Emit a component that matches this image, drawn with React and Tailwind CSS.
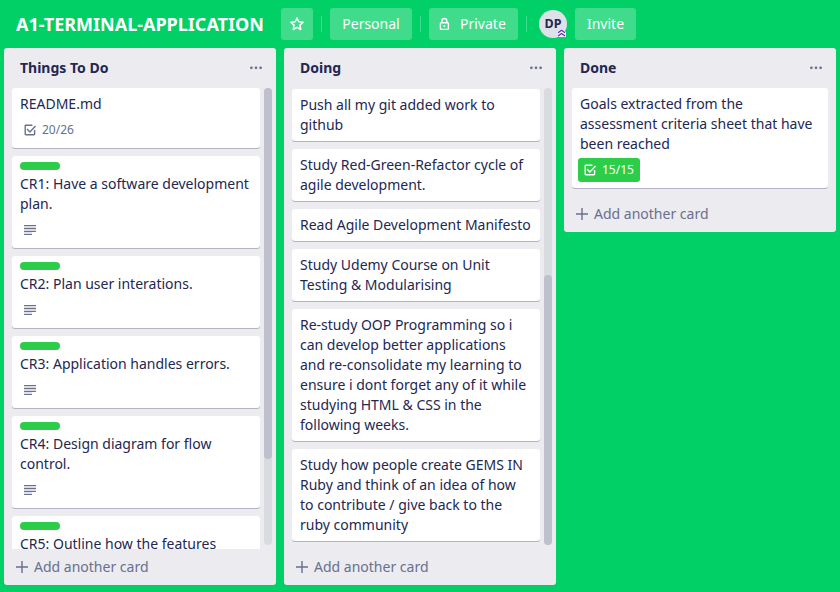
const todo = [
  { title: 'README.md', check: '20/26' },
  { title: 'CR1: Have a software development plan.', label: true, desc: true },
  { title: 'CR2: Plan user interations.', label: true, desc: true },
  { title: 'CR3: Application handles errors.', label: true, desc: true },
  { title: 'CR4: Design diagram for flow control.', label: true, desc: true },
  { title: 'CR5: Outline how the features', label: true, desc: true },
];

const doing = [
  { title: 'Push all my git added work to github' },
  { title: 'Study Red-Green-Refactor cycle of agile development.' },
  { title: 'Read Agile Development Manifesto' },
  { title: 'Study Udemy Course on Unit Testing & Modularising' },
  {
    title:
      'Re-study OOP Programming so i can develop better applications and re-consolidate my learning to ensure i dont forget any of it while studying HTML & CSS in the following weeks.',
  },
  {
    title:
      'Study how people create GEMS IN Ruby and think of an idea of how to contribute / give back to the ruby community',
  },
];

const done = [
  {
    title: 'Goals extracted from the assessment criteria sheet that have been reached',
    check: '15/15',
    complete: true,
  },
];

function CheckIcon() {
  return (
    <svg className="size-4 shrink-0" viewBox="0 0 16 16" fill="none" stroke="currentColor" strokeWidth="1.4">
      <path d="M10.4 3.3H3.8a.6.6 0 0 0-.6.6v8.2a.6.6 0 0 0 .6.6h8.2a.6.6 0 0 0 .6-.6V8" />
      <path d="M5 7l2.9 2.9 5.6-6" />
    </svg>
  );
}

function DescriptionIcon() {
  return (
    <svg className="size-4 shrink-0" viewBox="0 0 16 16" fill="currentColor">
      <rect x="2" y="3" width="12" height="7" opacity=".25" />
      <rect x="2" y="10" width="8" height="3" opacity=".2" />
      <rect x="2" y="3" width="12" height="1" rx=".3" />
      <rect x="2" y="6" width="12" height="1" rx=".3" />
      <rect x="2" y="9" width="12" height="1" rx=".3" />
      <rect x="2" y="12" width="8" height="1" rx=".3" />
    </svg>
  );
}

function Card({ card }) {
  return (
    <div className="shrink-0 rounded-[3px] bg-white px-2 pt-1.5 pb-0.5 shadow-[0_1px_0_#b3b3c4]">
      {card.label && <div className="mb-1 h-2 w-10 rounded-full bg-[#2bcd49]" />}
      <div className="mb-1">{card.title}</div>
      {(card.check || card.desc) && (
        <div className="-ml-0.5 flex pb-1">
          <div
            className={
              card.complete
                ? 'flex h-6 items-center gap-1 rounded-[3px] bg-[#2bcd49] pr-1.5 pl-1 text-xs text-white'
                : 'flex h-6 items-center gap-1 pr-1.5 pl-1 text-xs text-[#69708f]'
            }
          >
            {card.check ? <CheckIcon /> : <DescriptionIcon />}
            {card.check && <span>{card.check}</span>}
          </div>
        </div>
      )}
    </div>
  );
}

function List({ title, cards, thumb, className = '', cardsClass = '' }) {
  return (
    <section className={`flex w-[272px] flex-col rounded-[3px] bg-[#ebebf0] ${className}`}>
      <header className="flex h-10 shrink-0 items-center justify-between pr-3 pl-4">
        <h2 className="font-bold">{title}</h2>
        <svg className="size-4 text-[#69708f]" viewBox="0 0 16 16" fill="currentColor">
          <circle cx="3.4" cy="7.8" r="1.35" />
          <circle cx="8" cy="7.8" r="1.35" />
          <circle cx="12.6" cy="7.8" r="1.35" />
        </svg>
      </header>
      <div className="flex min-h-0 flex-1 gap-1 pr-1 pl-2">
        <div className={`flex min-w-0 flex-1 flex-col gap-2 overflow-hidden pb-2 ${cardsClass}`}>
          {cards.map((card) => (
            <Card key={card.title} card={card} />
          ))}
        </div>
        {thumb && (
          <div className="mb-1 w-2 shrink-0 rounded bg-[#dadbe1]">
            <div className={`rounded bg-[#bfbfcd] ${thumb}`} />
          </div>
        )}
      </div>
      <footer className="flex h-9 shrink-0 items-center gap-1.5 pl-3 text-[#69708f]">
        <svg className="size-3" viewBox="0 0 12 12" stroke="currentColor" strokeWidth="1.4">
          <path d="M6 0v12M0 6h12" />
        </svg>
        <span>Add another card</span>
      </footer>
    </section>
  );
}

function Divider() {
  return <div className="h-4 w-px bg-white/25" />;
}

export default function App() {
  return (
    <div className="flex h-[592px] w-[840px] flex-col overflow-hidden bg-[#00d066] font-['Noto_Sans',sans-serif] text-sm leading-5 text-[#232752]">
      <nav className="flex h-12 shrink-0 items-center gap-2 pl-4 text-white">
        <h1 className="mr-[9px] w-[248px] text-lg font-bold whitespace-nowrap">A1-TERMINAL-APPLICATION</h1>
        <button className="flex size-8 items-center justify-center rounded-[3px] bg-white/25">
          <svg className="size-4" viewBox="0 0 16 16" fill="none" stroke="currentColor" strokeWidth="1.5" strokeLinejoin="round">
            <path d="M8 2l1.75 3.7 4.35.55-3.15 2.9.8 4.35L8 11.4l-3.75 2.1.8-4.35-3.15-2.9 4.35-.55z" />
          </svg>
        </button>
        <Divider />
        <button className="h-8 w-[82px] rounded-[3px] bg-white/25">Personal</button>
        <Divider />
        <button className="flex h-8 w-[89px] items-center gap-2 rounded-[3px] bg-white/25 pl-[7px]">
          <svg className="size-4" viewBox="0 0 16 16" fill="none" stroke="currentColor" strokeWidth="1.4">
            <rect x="4.4" y="6.8" width="8" height="6.6" rx=".8" />
            <path d="M6 6.8V5a2.4 2.5 0 0 1 4.8 0v1.8" />
            <circle cx="8.4" cy="10.1" r="1" fill="currentColor" stroke="none" />
          </svg>
          <span>Private</span>
        </button>
        <Divider />
        <div className="relative ml-1 flex size-7 items-center justify-center rounded-full bg-[#dfe1e8] text-[12.5px] font-bold text-[#232752]">
          DP
          <svg className="absolute right-0 bottom-0 size-[10px]" viewBox="0 0 10 10" fill="none">
            <path d="M0 4L4.5 1 9 4v6H0z" fill="#f1edfa" />
            <path d="M1 4.8L4.5 2.3 8 4.8M1 8L4.5 5.5 8 8" stroke="#5f32b5" strokeWidth="1.2" />
            <path d="M0 9.5h9" stroke="#3d8f70" strokeWidth=".8" />
          </svg>
        </div>
        <button className="h-8 w-[61px] rounded-[3px] bg-white/25">Invite</button>
      </nav>
      <main className="flex items-start gap-2 px-1">
        <List title="Things To Do" cards={todo} thumb="h-[371px]" className="h-[537px]" />
        <List title="Doing" cards={doing} thumb="mt-[187px] h-[270px]" className="h-[537px]" cardsClass="pt-px" />
        <List title="Done" cards={done} cardsClass="mr-1" />
      </main>
    </div>
  );
}
